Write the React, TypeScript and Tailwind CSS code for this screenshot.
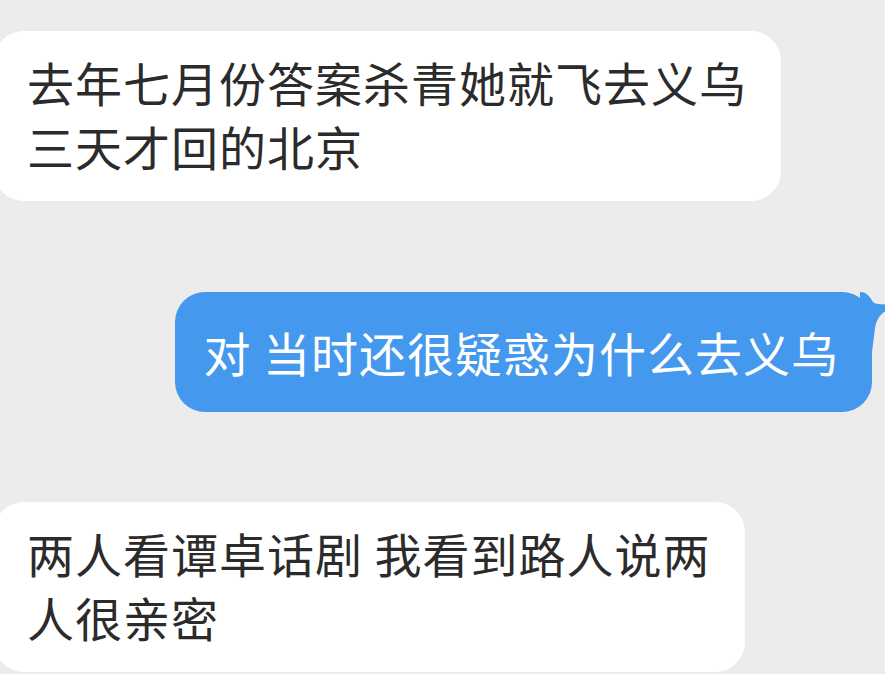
const font = {
  fontFamily: '"Noto Sans CJK SC", "Noto Sans", sans-serif',
};

const BLUE = "#4499ee";

const LeftBubble = ({ lines }: { lines: string[] }) => (
  <div className="-ml-[6px] self-start rounded-[30px] bg-white pb-[23px] pl-[33px] pr-[34px] pt-[19px]">
    {lines.map((line, i) => (
      <div key={i} className="whitespace-pre">
        {line}
      </div>
    ))}
  </div>
);

const RightBubble = ({ text }: { text: string }) => (
  <div className="relative mr-[13px] self-end">
    <div className="rounded-[30px] bg-[#4499ee] py-[28px] pl-[28px] pr-[33px] text-white whitespace-pre">
      {text}
    </div>
    {/* tail */}
    <svg
      className="absolute right-[-22px] top-0"
      width="34"
      height="60"
      viewBox="0 0 34 60"
    >
      <path
        d="M0 0 C7 0 10 5 13 10 C15 12 20 13 34 12 L34 16 C24 18 17 24 15 36 L12 60 L0 60 Z"
        fill={BLUE}
      />
    </svg>
  </div>
);

export default function App() {
  return (
    <div
      className="flex h-[674px] w-[885px] flex-col overflow-hidden bg-[#ececec] pt-[31px] text-[47px] leading-[64px] tracking-[1px] text-[#2b2b2b]"
      style={font}
    >
      <LeftBubble lines={["去年七月份答案杀青她就飞去义乌", "三天才回的北京"]} />
      <div className="h-[91px] shrink-0" />
      <RightBubble text="对 当时还很疑惑为什么去义乌" />
      <div className="h-[90px] shrink-0" />
      <LeftBubble lines={["两人看谭卓话剧 我看到路人说两", "人很亲密"]} />
    </div>
  );
}
